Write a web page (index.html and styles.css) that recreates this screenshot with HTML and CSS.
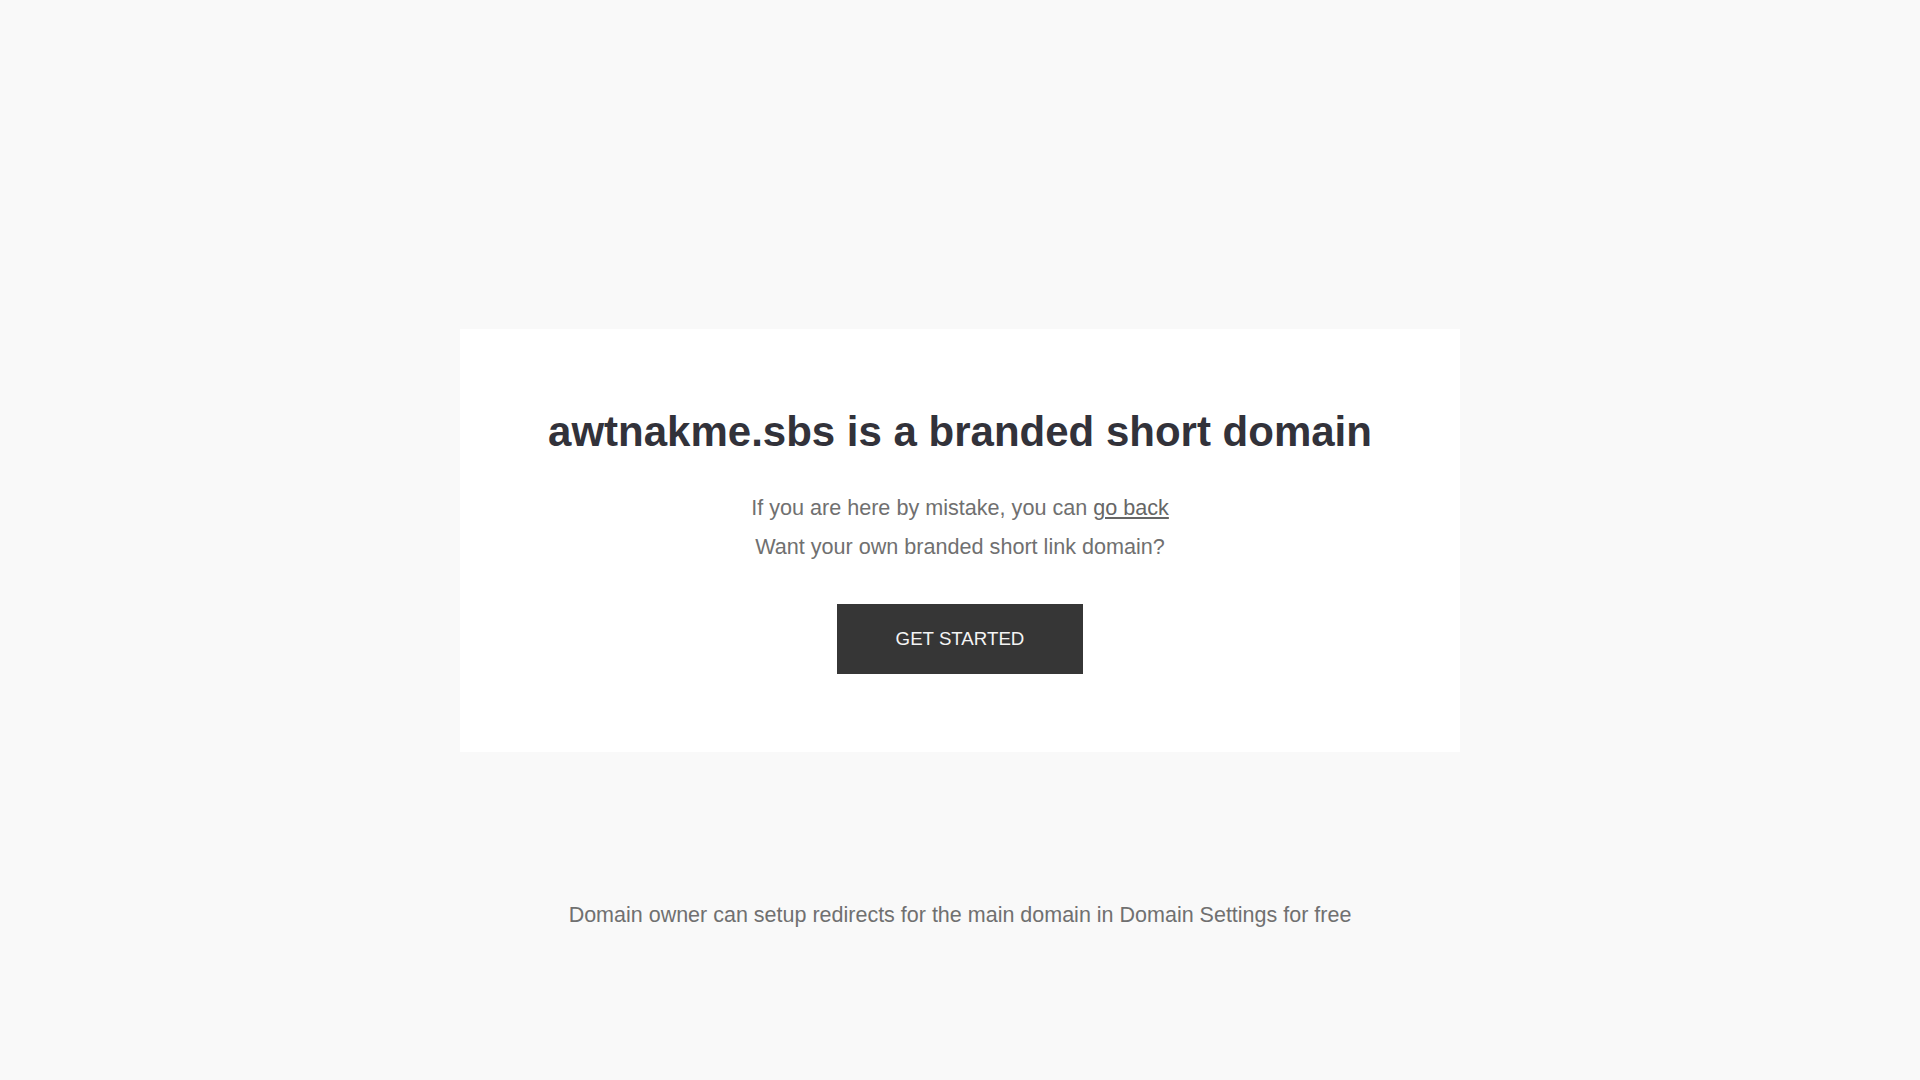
FILE: index.html
```html
<!DOCTYPE html>
<html lang="en">
<head>
<meta charset="utf-8">
<title>awtnakme.sbs</title>
<link rel="stylesheet" href="styles.css">
</head>
<body>
<div class="page">
  <div class="card">
    <h1 class="title">awtnakme.sbs is a branded short domain</h1>
    <p class="line">If you are here by mistake, you can <a class="link" href="#">go back</a></p>
    <p class="line">Want your own branded short link domain?</p>
    <a class="button" href="#">GET STARTED</a>
  </div>
  <p class="footer">Domain owner can setup redirects for the main domain in Domain Settings for free</p>
</div>
</body>
</html>
```

FILE: styles.css
```css
html, body {
  margin: 0;
  padding: 0;
  background: #f9f9f9;
}
body {
  font-family: "Liberation Sans", Arial, sans-serif;
  color: #707070;
}
.page {
  display: flex;
  flex-direction: column;
  align-items: center;
  padding-top: 329px;
}
.card {
  box-sizing: border-box;
  width: 1000px;
  background: #ffffff;
  padding: 78px 40px 78px;
  display: flex;
  flex-direction: column;
  align-items: center;
  text-align: center;
}
.title {
  margin: 0 0 31px;
  font-size: 42px;
  line-height: 50.4px;
  font-weight: 700;
  color: #32323a;
}
.line {
  margin: 0;
  font-size: 21.6px;
  line-height: 39px;
  color: #707070;
}
.link {
  color: #666666;
  text-decoration: underline;
}
.button {
  margin-top: 38px;
  display: block;
  box-sizing: border-box;
  width: 246px;
  height: 70px;
  line-height: 70px;
  padding: 0;
  background: #363636;
  color: #f4f4f4;
  font-size: 18.7px;
  text-decoration: none;
}
.footer {
  margin: 144px 0 0;
  font-size: 21.5px;
  line-height: 39px;
  color: #707070;
}
```
